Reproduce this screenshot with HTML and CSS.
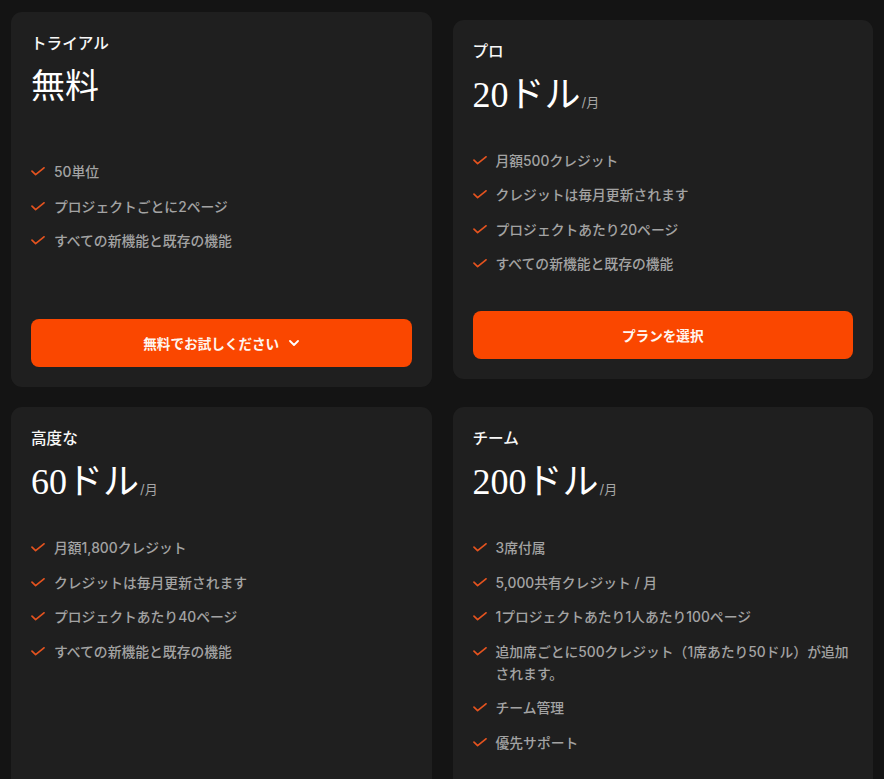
FILE: index.html
```html
<!DOCTYPE html>
<html lang="ja">
<head>
<meta charset="utf-8">
<title>料金プラン</title>
<link rel="stylesheet" href="styles.css">
</head>
<body>
<main class="plans">
  <section class="plan plan--trial">
    <h3 class="plan-name">トライアル</h3>
    <div class="plan-price"><span class="amount">無料</span></div>
    <ul class="features">
      <li><svg class="check" viewBox="0 0 14 9"><path d="M1 4.2 L4.6 7.6 L13 0.8"/></svg><span>50単位</span></li>
      <li><svg class="check" viewBox="0 0 14 9"><path d="M1 4.2 L4.6 7.6 L13 0.8"/></svg><span>プロジェクトごとに2ページ</span></li>
      <li><svg class="check" viewBox="0 0 14 9"><path d="M1 4.2 L4.6 7.6 L13 0.8"/></svg><span>すべての新機能と既存の機能</span></li>
    </ul>
    <button class="cta">無料でお試しください<svg class="chev" viewBox="0 0 10 6"><path d="M1 1 L5 5 L9 1"/></svg></button>
  </section>

  <section class="plan plan--pro">
    <h3 class="plan-name">プロ</h3>
    <div class="plan-price"><span class="amount">20ドル</span><span class="per">/月</span></div>
    <ul class="features">
      <li><svg class="check" viewBox="0 0 14 9"><path d="M1 4.2 L4.6 7.6 L13 0.8"/></svg><span>月額500クレジット</span></li>
      <li><svg class="check" viewBox="0 0 14 9"><path d="M1 4.2 L4.6 7.6 L13 0.8"/></svg><span>クレジットは毎月更新されます</span></li>
      <li><svg class="check" viewBox="0 0 14 9"><path d="M1 4.2 L4.6 7.6 L13 0.8"/></svg><span>プロジェクトあたり20ページ</span></li>
      <li><svg class="check" viewBox="0 0 14 9"><path d="M1 4.2 L4.6 7.6 L13 0.8"/></svg><span>すべての新機能と既存の機能</span></li>
    </ul>
    <button class="cta">プランを選択</button>
  </section>

  <section class="plan">
    <h3 class="plan-name">高度な</h3>
    <div class="plan-price"><span class="amount">60ドル</span><span class="per">/月</span></div>
    <ul class="features">
      <li><svg class="check" viewBox="0 0 14 9"><path d="M1 4.2 L4.6 7.6 L13 0.8"/></svg><span>月額1,800クレジット</span></li>
      <li><svg class="check" viewBox="0 0 14 9"><path d="M1 4.2 L4.6 7.6 L13 0.8"/></svg><span>クレジットは毎月更新されます</span></li>
      <li><svg class="check" viewBox="0 0 14 9"><path d="M1 4.2 L4.6 7.6 L13 0.8"/></svg><span>プロジェクトあたり40ページ</span></li>
      <li><svg class="check" viewBox="0 0 14 9"><path d="M1 4.2 L4.6 7.6 L13 0.8"/></svg><span>すべての新機能と既存の機能</span></li>
    </ul>
    <button class="cta">プランを選択</button>
  </section>

  <section class="plan">
    <h3 class="plan-name">チーム</h3>
    <div class="plan-price"><span class="amount">200ドル</span><span class="per">/月</span></div>
    <ul class="features">
      <li><svg class="check" viewBox="0 0 14 9"><path d="M1 4.2 L4.6 7.6 L13 0.8"/></svg><span>3席付属</span></li>
      <li><svg class="check" viewBox="0 0 14 9"><path d="M1 4.2 L4.6 7.6 L13 0.8"/></svg><span>5,000共有クレジット / 月</span></li>
      <li><svg class="check" viewBox="0 0 14 9"><path d="M1 4.2 L4.6 7.6 L13 0.8"/></svg><span>1プロジェクトあたり1人あたり100ページ</span></li>
      <li><svg class="check" viewBox="0 0 14 9"><path d="M1 4.2 L4.6 7.6 L13 0.8"/></svg><span>追加席ごとに500クレジット（1席あたり50ドル）が追加されます。</span></li>
      <li><svg class="check" viewBox="0 0 14 9"><path d="M1 4.2 L4.6 7.6 L13 0.8"/></svg><span>チーム管理</span></li>
      <li><svg class="check" viewBox="0 0 14 9"><path d="M1 4.2 L4.6 7.6 L13 0.8"/></svg><span>優先サポート</span></li>
    </ul>
    <button class="cta">プランを選択</button>
  </section>
</main>
</body>
</html>
```

FILE: styles.css
```css
* {
  box-sizing: border-box;
}

html, body {
  margin: 0;
  background: #141414;
}

body {
  font-family: Inter, "Noto Sans CJK JP", sans-serif;
  color: #f5f5f5;
}

.plans {
  display: grid;
  grid-template-columns: 1fr 1fr;
  column-gap: 21px;
  row-gap: 20px;
  padding: 12px 11px 12px 11px;
}

.plan {
  background: #1f1f1f;
  border-radius: 11px;
  padding: 20px;
  display: flex;
  flex-direction: column;
}

.plan--pro {
  align-self: center;
}

.plan-name {
  margin: 0;
  font-size: 15.6px;
  line-height: 24px;
  font-weight: 500;
  color: #f7f7f7;
}

.plan-price {
  margin-top: 8px;
  height: 46px;
  display: flex;
  align-items: baseline;
  line-height: 46px;
}

.amount {
  font-family: "Liberation Serif", "Noto Sans CJK JP", serif;
  font-size: 36px;
  font-weight: 400;
  color: #ffffff;
}

.plan--trial .amount {
  font-size: 34px;
}

.per {
  font-size: 13px;
  color: #a6a6a6;
  margin-left: 1px;
}

.features {
  list-style: none;
  margin: 32px 0 36px;
  padding: 0;
  display: flex;
  flex-direction: column;
  gap: 12.5px;
  flex: 1;
}

.plan--trial .features {
  margin-top: 51px;
  margin-bottom: 67px;
}

.features li {
  display: flex;
  align-items: flex-start;
  gap: 9px;
  font-size: 13.8px;
  line-height: 22px;
  font-weight: 500;
  color: #a3a3a3;
}

.check {
  flex: none;
  width: 14px;
  height: 9px;
  margin-top: 6px;
  fill: none;
  stroke: #e4531f;
  stroke-width: 1.7;
  stroke-linecap: round;
  stroke-linejoin: round;
}

.cta {
  display: flex;
  align-items: center;
  justify-content: center;
  gap: 10px;
  width: 100%;
  height: 48px;
  border: none;
  border-radius: 8px;
  background: #fa4700;
  color: #fff6f0;
  font-family: Inter, "Noto Sans CJK JP", sans-serif;
  font-size: 13.6px;
  font-weight: 600;
  cursor: pointer;
}

.chev {
  width: 10px;
  height: 6px;
  fill: none;
  stroke: #ffffff;
  stroke-width: 1.8;
  stroke-linecap: round;
  stroke-linejoin: round;
}
```
